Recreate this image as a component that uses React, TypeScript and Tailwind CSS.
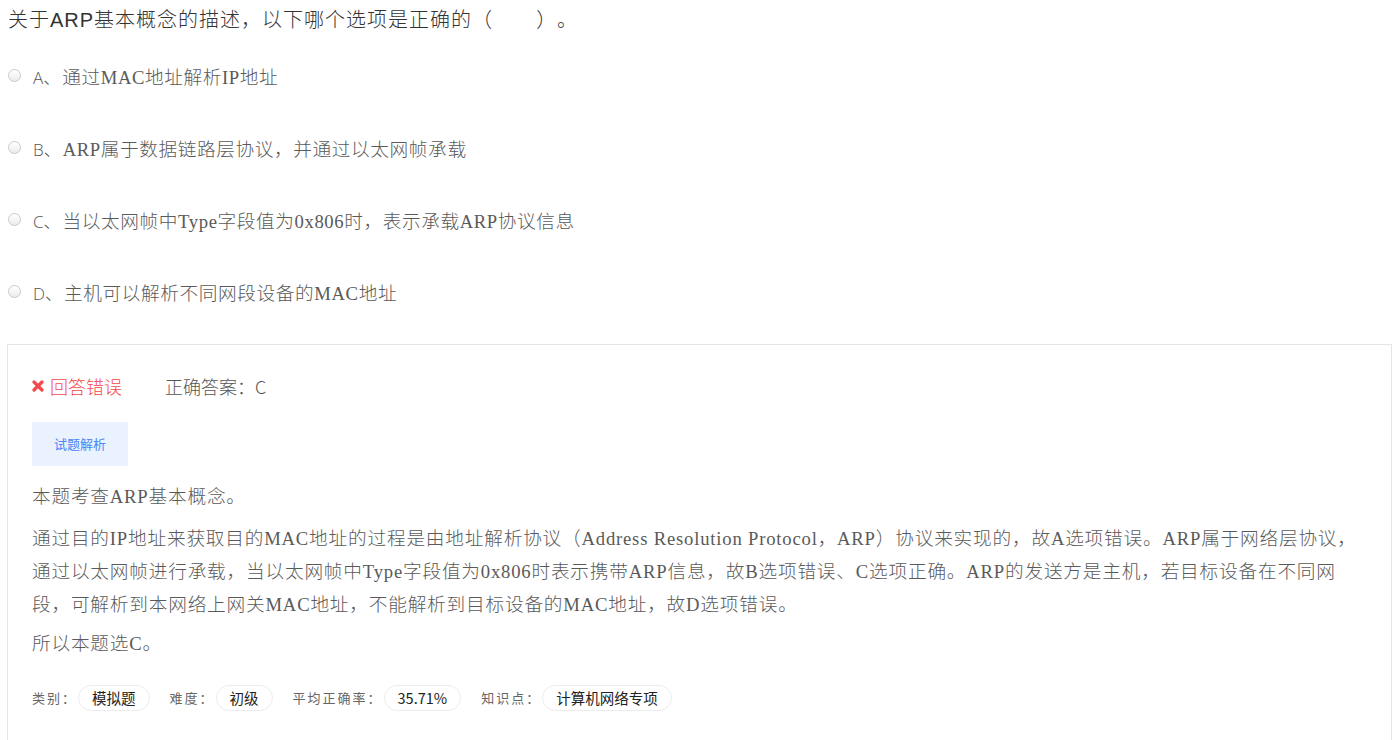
const serif = "font-['Liberation_Serif','Noto_Sans_CJK_SC',serif]"

const options = [
  { key: 'A', text: '通过MAC地址解析IP地址' },
  { key: 'B', text: 'ARP属于数据链路层协议，并通过以太网帧承载' },
  { key: 'C', text: '当以太网帧中Type字段值为0x806时，表示承载ARP协议信息' },
  { key: 'D', text: '主机可以解析不同网段设备的MAC地址' },
]

const meta = [
  { label: '类别：', value: '模拟题' },
  { label: '难度：', value: '初级' },
  { label: '平均正确率：', value: '35.71%' },
  { label: '知识点：', value: '计算机网络专项' },
]

function Radio() {
  return (
    <span className="inline-block w-[13px] h-[13px] -translate-y-[3px] rounded-full border border-[#c9c9c9] bg-gradient-to-b from-white to-[#ececec] shrink-0" />
  )
}

function WrongIcon() {
  return (
    <svg viewBox="0 0 12 12" className="w-[12px] h-[12px]" aria-hidden>
      <path d="M2 2 L10 10 M10 2 L2 10" stroke="#f5484a" strokeWidth="3.2" strokeLinecap="round" />
    </svg>
  )
}

export default function App() {
  return (
    <div className="bg-white min-h-[740px] text-[#555] [text-spacing-trim:space-all] font-['Noto_Sans_CJK_SC',sans-serif]">
      <h1 className="pl-[8px] text-[20px] leading-[40px] tracking-[1px] text-[#333] font-light font-['Liberation_Sans','Noto_Sans_CJK_SC',sans-serif]">
        关于ARP基本概念的描述，以下哪个选项是正确的（<span className="inline-block w-[43px]" />）。
      </h1>

      <ul className="mt-[23px] flex flex-col gap-[42px]">
        {options.map(o => (
          <li key={o.key} className="flex items-center h-[30px] pl-[8px]">
            <Radio />
            <span className="ml-[12px] text-[17px] text-[#555] font-['Open_Sans','Noto_Sans_CJK_SC',sans-serif] font-light">
              {o.key}、
            </span>
            <span className={`ml-[2px] text-[18.67px] tracking-[0.6px] text-[#5a5a5a] font-light ${serif}`}>
              {o.text}
            </span>
          </li>
        ))}
      </ul>

      <div className="mt-[35px] ml-[7px] w-[1385px] border border-[#e5e5e5] px-[24px] pt-[27px] pb-[40px]">
        <div className="flex items-center h-[28px] text-[18px] font-light">
          <span className="flex items-center gap-[6px] text-[#f5484a]">
            <WrongIcon />
            回答错误
          </span>
          <span className="ml-[43px] text-[#555]">正确答案：C</span>
        </div>

        <div className="mt-[22px] w-[96px] h-[44px] flex items-center justify-center bg-[#ebf2ff] text-[13px] text-[#4a86f7]">
          试题解析
        </div>

        <div className={`mt-[14px] text-[18.67px] leading-[33px] tracking-[0.8px] text-[#5a5a5a] font-light ${serif}`}>
          <p>本题考查ARP基本概念。</p>
          <p className="mt-[9px]">
            通过目的IP地址来获取目的MAC地址的过程是由地址解析协议（Address Resolution Protocol，ARP）协议来实现的，故A选项错误。ARP属于网络层协议，通过以太网帧进行承载，当以太网帧中Type字段值为0x806时表示携带ARP信息，故B选项错误、C选项正确。ARP的发送方是主机，若目标设备在不同网段，可解析到本网络上网关MAC地址，不能解析到目标设备的MAC地址，故D选项错误。
          </p>
          <p className="mt-[6px]">所以本题选C。</p>
        </div>

        <div className="mt-[25px] flex items-center">
          {meta.map(m => (
            <div key={m.label} className="flex items-center mr-[20px]">
              <span className="text-[13px] tracking-[2px] text-[#666]">{m.label}</span>
              <span className="ml-[1px] h-[26px] px-[13px] flex items-center rounded-full border border-[#ececec] text-[14.5px] text-[#222]">
                {m.value}
              </span>
            </div>
          ))}
        </div>
      </div>
    </div>
  )
}
